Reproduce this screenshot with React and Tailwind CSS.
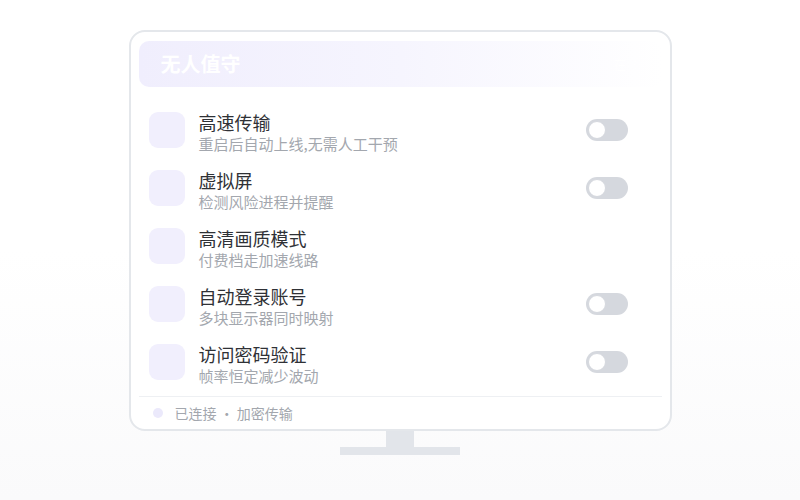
import React from 'react';

const rows = [
  { title: '高速传输', desc: '重启后自动上线,无需人工干预', toggle: true },
  { title: '虚拟屏', desc: '检测风险进程并提醒', toggle: true },
  { title: '高清画质模式', desc: '付费档走加速线路', toggle: false },
  { title: '自动登录账号', desc: '多块显示器同时映射', toggle: true },
  { title: '访问密码验证', desc: '帧率恒定减少波动', toggle: true },
];

const Toggle = () => (
  <div className="flex h-[22px] w-[42px] items-center rounded-full bg-[#d5d8de] px-[2px]">
    <div className="h-[18px] w-[18px] rounded-full border border-[#d5d8de] bg-white" />
  </div>
);

export default function App() {
  return (
    <div
      className="flex h-[500px] w-[800px] flex-col items-center bg-gradient-to-b from-white via-white to-[#fafafb] pt-[30px]"
      style={{ fontFamily: '"Noto Sans CJK SC", "Noto Sans", sans-serif' }}
    >
      {/* screen */}
      <div className="w-[543px] rounded-[16px] border-2 border-[#e4e7eb] bg-white px-[8px] pt-[9px]">
        <div className="flex h-[46px] items-center justify-between rounded-[10px] bg-gradient-to-r from-[#f0eefd] via-[#f6f5fe] to-white px-[22px]">
          <span className="text-[20px] font-semibold text-white">无人值守</span>
          <span className="text-[13px] text-white">在线</span>
        </div>

        <div className="mt-[14px] flex flex-col">
          {rows.map((r) => (
            <div key={r.title} className="flex h-[58px] items-center pl-[10px] pr-[34px]">
              <div className="h-[36px] w-[36px] rounded-[9px] bg-[#f1effd]" />
              <div className="ml-[14px] mt-[4px] flex flex-1 flex-col">
                <span className="text-[18px] leading-[24px] text-[#2f3136]">{r.title}</span>
                <span className="text-[15px] leading-[20px] text-[#a3a7ae]">{r.desc}</span>
              </div>
              {r.toggle && <Toggle />}
            </div>
          ))}
        </div>

        <div className="mt-[5px] flex h-[33px] items-center border-t border-[#eef0f3] pl-[14px]">
          <div className="h-[10px] w-[10px] rounded-full bg-[#ebe9fb]" />
          <span className="ml-[12px] text-[14px] text-[#a3a7ae]">已连接 · 加密传输</span>
        </div>
      </div>

      {/* stand */}
      <div className="h-[16px] w-[28px] bg-[#e2e5ea]" />
      <div className="h-[8px] w-[120px] bg-[#e2e5ea]" />
    </div>
  );
}
